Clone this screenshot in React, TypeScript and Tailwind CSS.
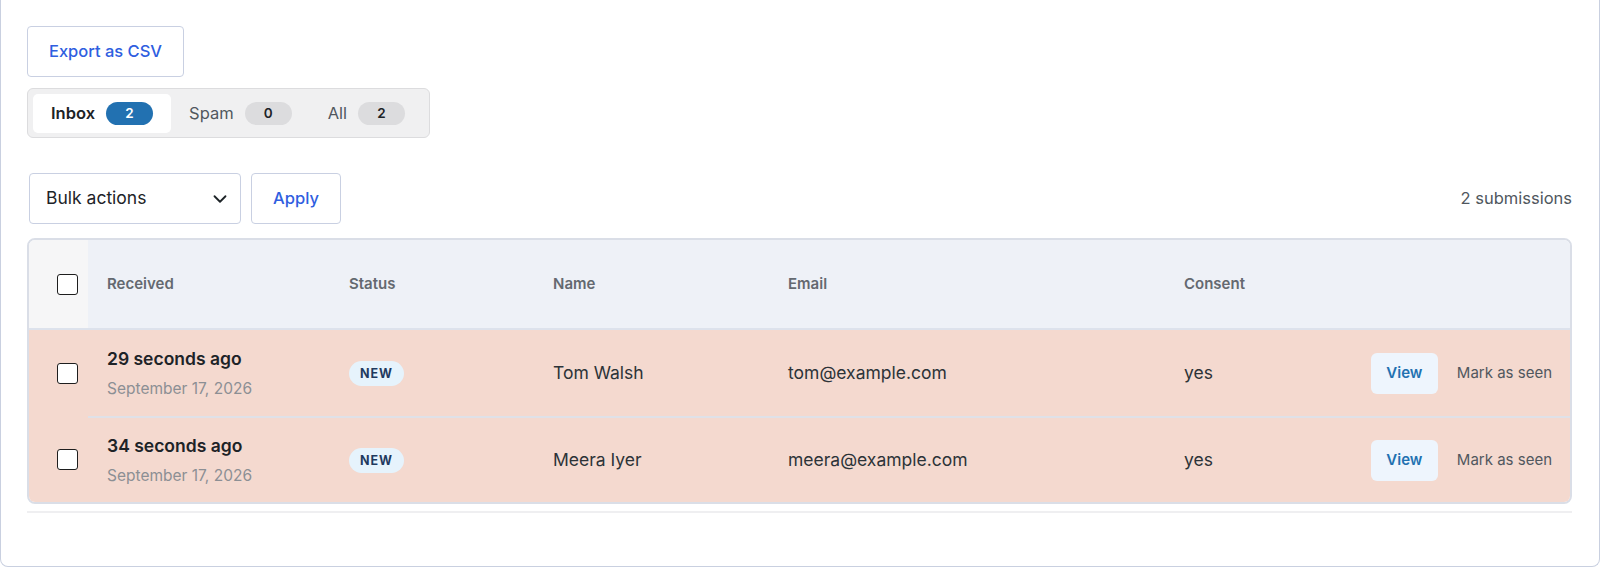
import { ChevronDown } from 'lucide-react'

// Abas de filtro da caixa de envios
const tabs = [
  { label: 'Inbox', count: 2, active: true },
  { label: 'Spam', count: 0, active: false },
  { label: 'All', count: 2, active: false },
]

// Envios recebidos pelo formulario
const submissions = [
  { ago: '29 seconds ago', date: 'September 17, 2026', name: 'Tom Walsh', email: 'tom@example.com', consent: 'yes' },
  { ago: '34 seconds ago', date: 'September 17, 2026', name: 'Meera Iyer', email: 'meera@example.com', consent: 'yes' },
]

function Checkbox() {
  return <span className="block w-[21px] h-[21px] rounded-[3px] border-[1.5px] border-[#1e1e1e] bg-white" />
}

export default function App() {
  return (
    <div className="h-[567px] bg-white font-['Inter','Noto_Sans',sans-serif]">
      <div className="h-[567px] border border-t-0 border-[#c9d0e0] rounded-b-lg pl-[26px] pr-[27px] pt-[26px]">
        {/* Exportacao */}
        <button className="h-[51px] w-[157px] rounded-[4px] border border-[#c9d0e2] bg-white text-[16.5px] font-medium text-[#2f5ee0]">
          Export as CSV
        </button>

        {/* Abas */}
        <div className="mt-[11px] flex h-[50px] w-[403px] items-center rounded-[6px] border border-[#dcdcde] bg-[#f0f0f1] px-[5px]">
          {tabs.map(tab => (
            <div
              key={tab.label}
              className={`flex h-[39px] items-center gap-[11px] rounded-[5px] px-[18px] ${tab.active ? 'bg-white' : ''}`}
            >
              <span className={`text-[16.5px] ${tab.active ? 'font-semibold text-[#1d2327]' : 'text-[#50575e]'}`}>{tab.label}</span>
              <span
                className={`flex h-[23px] w-[47px] items-center justify-center rounded-full text-[13.5px] font-semibold ${tab.active ? 'bg-[#2271b1] text-white' : 'bg-[#dcdcde] text-[#1d2327]'}`}
              >
                {tab.count}
              </span>
            </div>
          ))}
        </div>

        {/* Acoes em massa */}
        <div className="mt-[35px] flex items-center">
          <div className="ml-[2px] flex h-[51px] w-[212px] items-center justify-between rounded-[4px] border border-[#c9d0e2] bg-white pl-[16px] pr-[9px] text-[17.5px] text-[#1d2327]">
            Bulk actions
            <ChevronDown size={22} strokeWidth={2} />
          </div>
          <button className="ml-[10px] h-[51px] w-[90px] rounded-[4px] border border-[#c9d0e2] bg-white text-[16.5px] font-medium text-[#2f5ee0]">
            Apply
          </button>
          <span className="ml-auto text-[16.5px] text-[#50575e]">2 submissions</span>
        </div>

        {/* Tabela de envios */}
        <div className="mt-[14px] overflow-hidden rounded-[8px] border-2 border-[#dadee7]">
          <div className="flex h-[90px] items-stretch border-b-2 border-[#dde2ec] bg-[#eef1f7] text-[15px] font-semibold text-[#646970]">
            <div className="flex w-[59px] items-center justify-end bg-[#f6f6f7] pr-[10px]">
              <Checkbox />
            </div>
            <div className="flex w-[261px] items-center pl-[19px]">Received</div>
            <div className="flex w-[204px] items-center">Status</div>
            <div className="flex w-[235px] items-center">Name</div>
            <div className="flex w-[396px] items-center">Email</div>
            <div className="flex items-center">Consent</div>
          </div>
          {submissions.map((s, i) => (
            <div key={s.email} className="flex bg-[#f4d9cf]">
              <div className="flex w-[59px] items-center justify-end pr-[10px]">
                <Checkbox />
              </div>
              <div className={`flex h-[86px] flex-1 items-center ${i > 0 ? 'border-t-2 border-[#dfe1e8]' : ''}`}>
                <div className="flex w-[261px] flex-col pl-[19px]">
                  <span className="text-[17.5px] font-semibold text-[#1d2327]">{s.ago}</span>
                  <span className="mt-[4px] text-[15.5px] text-[#8c8f94]">{s.date}</span>
                </div>
                <div className="w-[204px]">
                  <span className="inline-flex h-[25px] items-center rounded-full bg-[#e6f3fc] px-[11px] text-[12.5px] font-bold tracking-[0.08em] text-[#1f3a5f]">
                    NEW
                  </span>
                </div>
                <div className="w-[235px] text-[17.5px] text-[#2c3338]">{s.name}</div>
                <div className="w-[396px] text-[17.5px] text-[#2c3338]">{s.email}</div>
                <div className="flex-1 text-[17.5px] text-[#2c3338]">{s.consent}</div>
                <button className="h-[41px] w-[67px] rounded-[6px] bg-[#eef5fd] text-[15px] font-semibold text-[#2271b1]">
                  View
                </button>
                <span className="ml-[19px] mr-[18px] text-[15px] text-[#50575e]">Mark as seen</span>
              </div>
            </div>
          ))}
        </div>
        <div className="mt-[7px] h-[2px] bg-[#efeff1]" />
      </div>
    </div>
  )
}
